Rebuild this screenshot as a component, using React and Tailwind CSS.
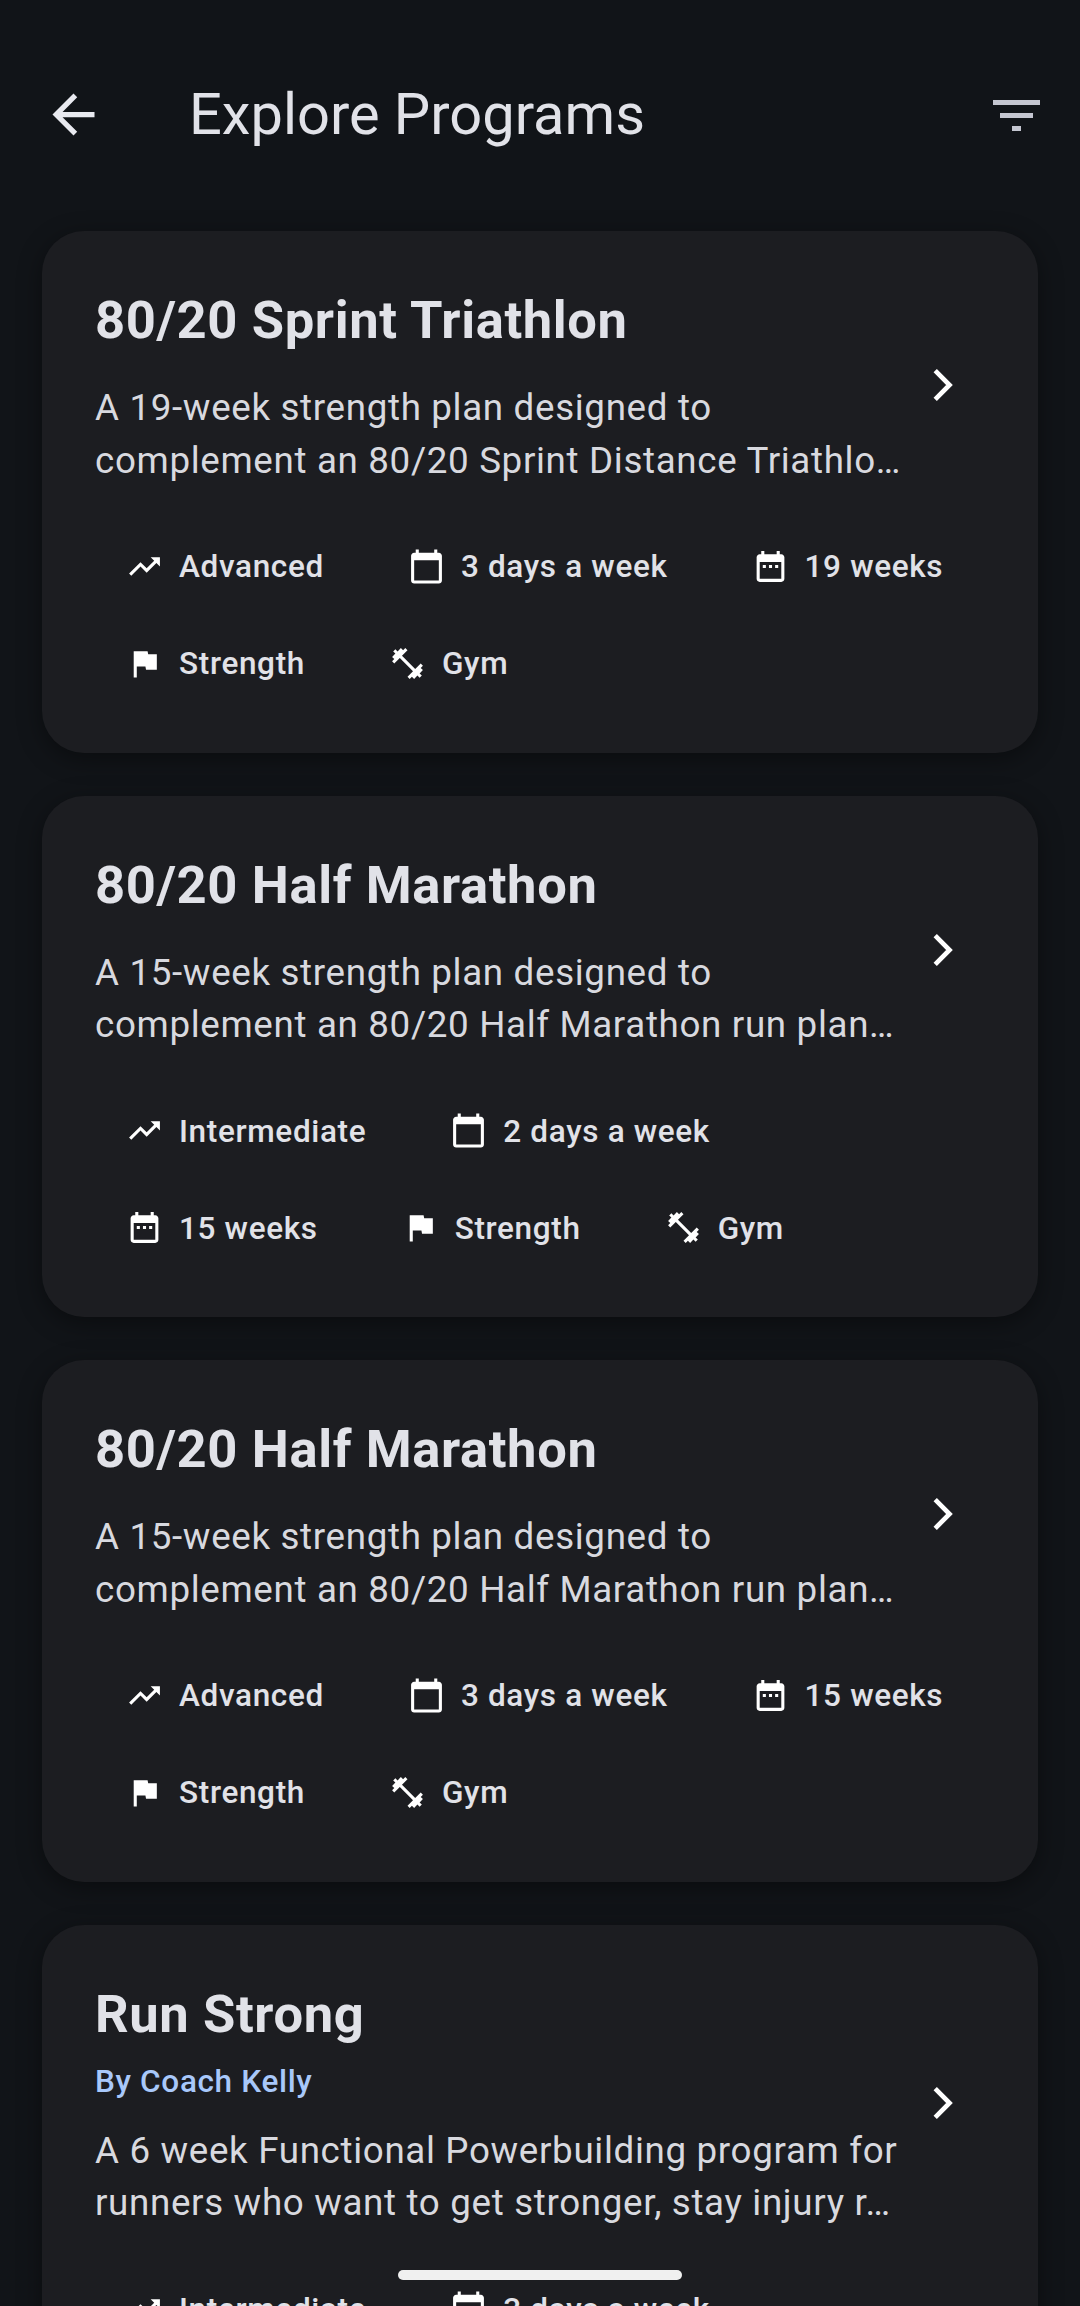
import React from 'react';

const ICONS = {
  level: 'M16 6l2.29 2.29-4.88 4.88-4-4L2 16.59 3.41 18l6-6 4 4 6.3-6.29L22 12V6z',
  days: 'M20 3h-1V1h-2v2H7V1H5v2H4c-1.1 0-2 .9-2 2v16c0 1.1.9 2 2 2h16c1.1 0 2-.9 2-2V5c0-1.1-.9-2-2-2zm0 18H4V8h16v13z',
  weeks: 'M19 4h-1V2h-2v2H8V2H6v2H5C3.9 4 3 4.9 3 6v14c0 1.1.9 2 2 2h14c1.1 0 2-.9 2-2V6c0-1.1-.9-2-2-2zm0 16H5V9h14v11zM7 11h2v2H7zm4 0h2v2h-2zm4 0h2v2h-2z',
  flag: 'M14.4 6L14 4H5v17h2v-7h5.6l.4 2h7V6z',
  gym: 'M20.57 14.86L22 13.43 20.57 12 17 15.57 8.43 7 12 3.43 10.57 2 9.14 3.43 7.71 2 5.57 4.14 4.14 2.71 2.71 4.14l1.43 1.43L2 7.71l1.43 1.43L2 10.57 3.43 12 7 8.43 15.57 17 12 20.57 13.43 22l1.43-1.43L16.29 22l2.14-2.14 1.43 1.43 1.43-1.43-1.43-1.43L22 16.29z',
};

const PROGRAMS = [
  {
    title: '80/20 Sprint Triathlon',
    desc: ['A 19-week strength plan designed to', 'complement an 80/20 Sprint Distance Triathlo…'],
    chips: [['level', 'Advanced'], ['days', '3 days a week'], ['weeks', '19 weeks'], ['flag', 'Strength'], ['gym', 'Gym']],
  },
  {
    title: '80/20 Half Marathon',
    desc: ['A 15-week strength plan designed to', 'complement an 80/20 Half Marathon run plan…'],
    chips: [['level', 'Intermediate'], ['days', '2 days a week'], ['weeks', '15 weeks'], ['flag', 'Strength'], ['gym', 'Gym']],
  },
  {
    title: '80/20 Half Marathon',
    desc: ['A 15-week strength plan designed to', 'complement an 80/20 Half Marathon run plan…'],
    chips: [['level', 'Advanced'], ['days', '3 days a week'], ['weeks', '15 weeks'], ['flag', 'Strength'], ['gym', 'Gym']],
  },
  {
    title: 'Run Strong',
    coach: 'By Coach Kelly',
    desc: ['A 6 week Functional Powerbuilding program for', 'runners who want to get stronger, stay injury r…'],
    chips: [['level', 'Intermediate'], ['days', '3 days a week'], ['weeks', '6 weeks'], ['flag', 'Strength'], ['gym', 'Gym']],
  },
];

function Chip({ icon, label }) {
  return (
    <div className="flex h-[76px] items-center pl-[31px] pr-[28px]">
      <svg viewBox="0 0 24 24" fill="white" className="mb-[2px] h-[37px] w-[37px] shrink-0">
        <path d={ICONS[icon]} />
      </svg>
      <span className="ml-[16px] text-[31.5px] font-medium leading-[42px] tracking-[0.66px] text-[#e1e2e8]">{label}</span>
    </div>
  );
}

function ProgramCard({ program }) {
  return (
    <div className="rounded-[42px] bg-[#1c1d21] pb-[50.5px] pl-[53px] pr-[53px] pt-[55px] shadow-[0_6px_24px_rgba(0,0,0,0.4)]">
      <div className="flex items-center">
        <div className="w-[812px]">
          <h2 className="text-[52.5px] font-bold leading-[68px] tracking-[0.62px] text-[#e1e2e8]">{program.title}</h2>
          {program.coach && (
            <p className="mt-[13px] text-[31.5px] font-medium leading-[42px] tracking-[0.66px] text-[#a8c8fa]">{program.coach}</p>
          )}
          <div className={program.coach ? 'mt-[22px]' : 'mt-[28px]'}>
            {program.desc.map((line) => (
              <p key={line} className="whitespace-nowrap text-[36.75px] leading-[52.5px] tracking-[0.66px] text-[#d8d9df]">{line}</p>
            ))}
          </div>
        </div>
        <svg viewBox="0 0 24 24" fill="none" stroke="white" strokeWidth="1.7" className="mb-[3px] ml-[4px] h-[66px] w-[66px] shrink-0">
          <path d="M8.8 6.8L14 12l-5.2 5.2" />
        </svg>
      </div>
      <div className="mt-[42px] flex flex-wrap gap-x-[25px] gap-y-[21px]">
        {program.chips.map(([icon, label]) => (
          <Chip key={label} icon={icon} label={label} />
        ))}
      </div>
    </div>
  );
}

export default function App() {
  return (
    <div className="relative h-[2306px] w-[1080px] overflow-hidden bg-[#111418] font-['Roboto',sans-serif]">
      {/* Top bar */}
      <div className="flex h-[231px] items-start pt-[83px]">
        <div className="ml-[42px] flex h-[63px] items-center">
          <svg viewBox="0 0 24 24" fill="#e9eaf0" className="h-[63px] w-[63px]">
            <path d="M20 11H7.83l5.59-5.59L12 4l-8 8 8 8 1.41-1.41L7.83 13H20v-2z" />
          </svg>
        </div>
        <h1 className="ml-[84px] text-[57.75px] font-normal leading-[63px] text-[#e1e2e8]">Explore Programs</h1>
        <svg viewBox="0 0 48 32" fill="#c4c6d0" className="ml-auto mr-[39px] mt-[17px] h-[32px] w-[48px]">
          <path d="M0 0h47v5H0zM7 13h33v5H7zM19 26h9v5h-9z" />
        </svg>
      </div>

      {/* Program list */}
      <div className="flex flex-col gap-[43px] px-[42px]">
        {PROGRAMS.map((program, i) => (
          <ProgramCard key={i} program={program} />
        ))}
      </div>

      {/* Gesture bar */}
      <div className="absolute bottom-[26px] left-[398px] h-[10px] w-[284px] rounded-full bg-[#f0f0f0]" />
    </div>
  );
}
